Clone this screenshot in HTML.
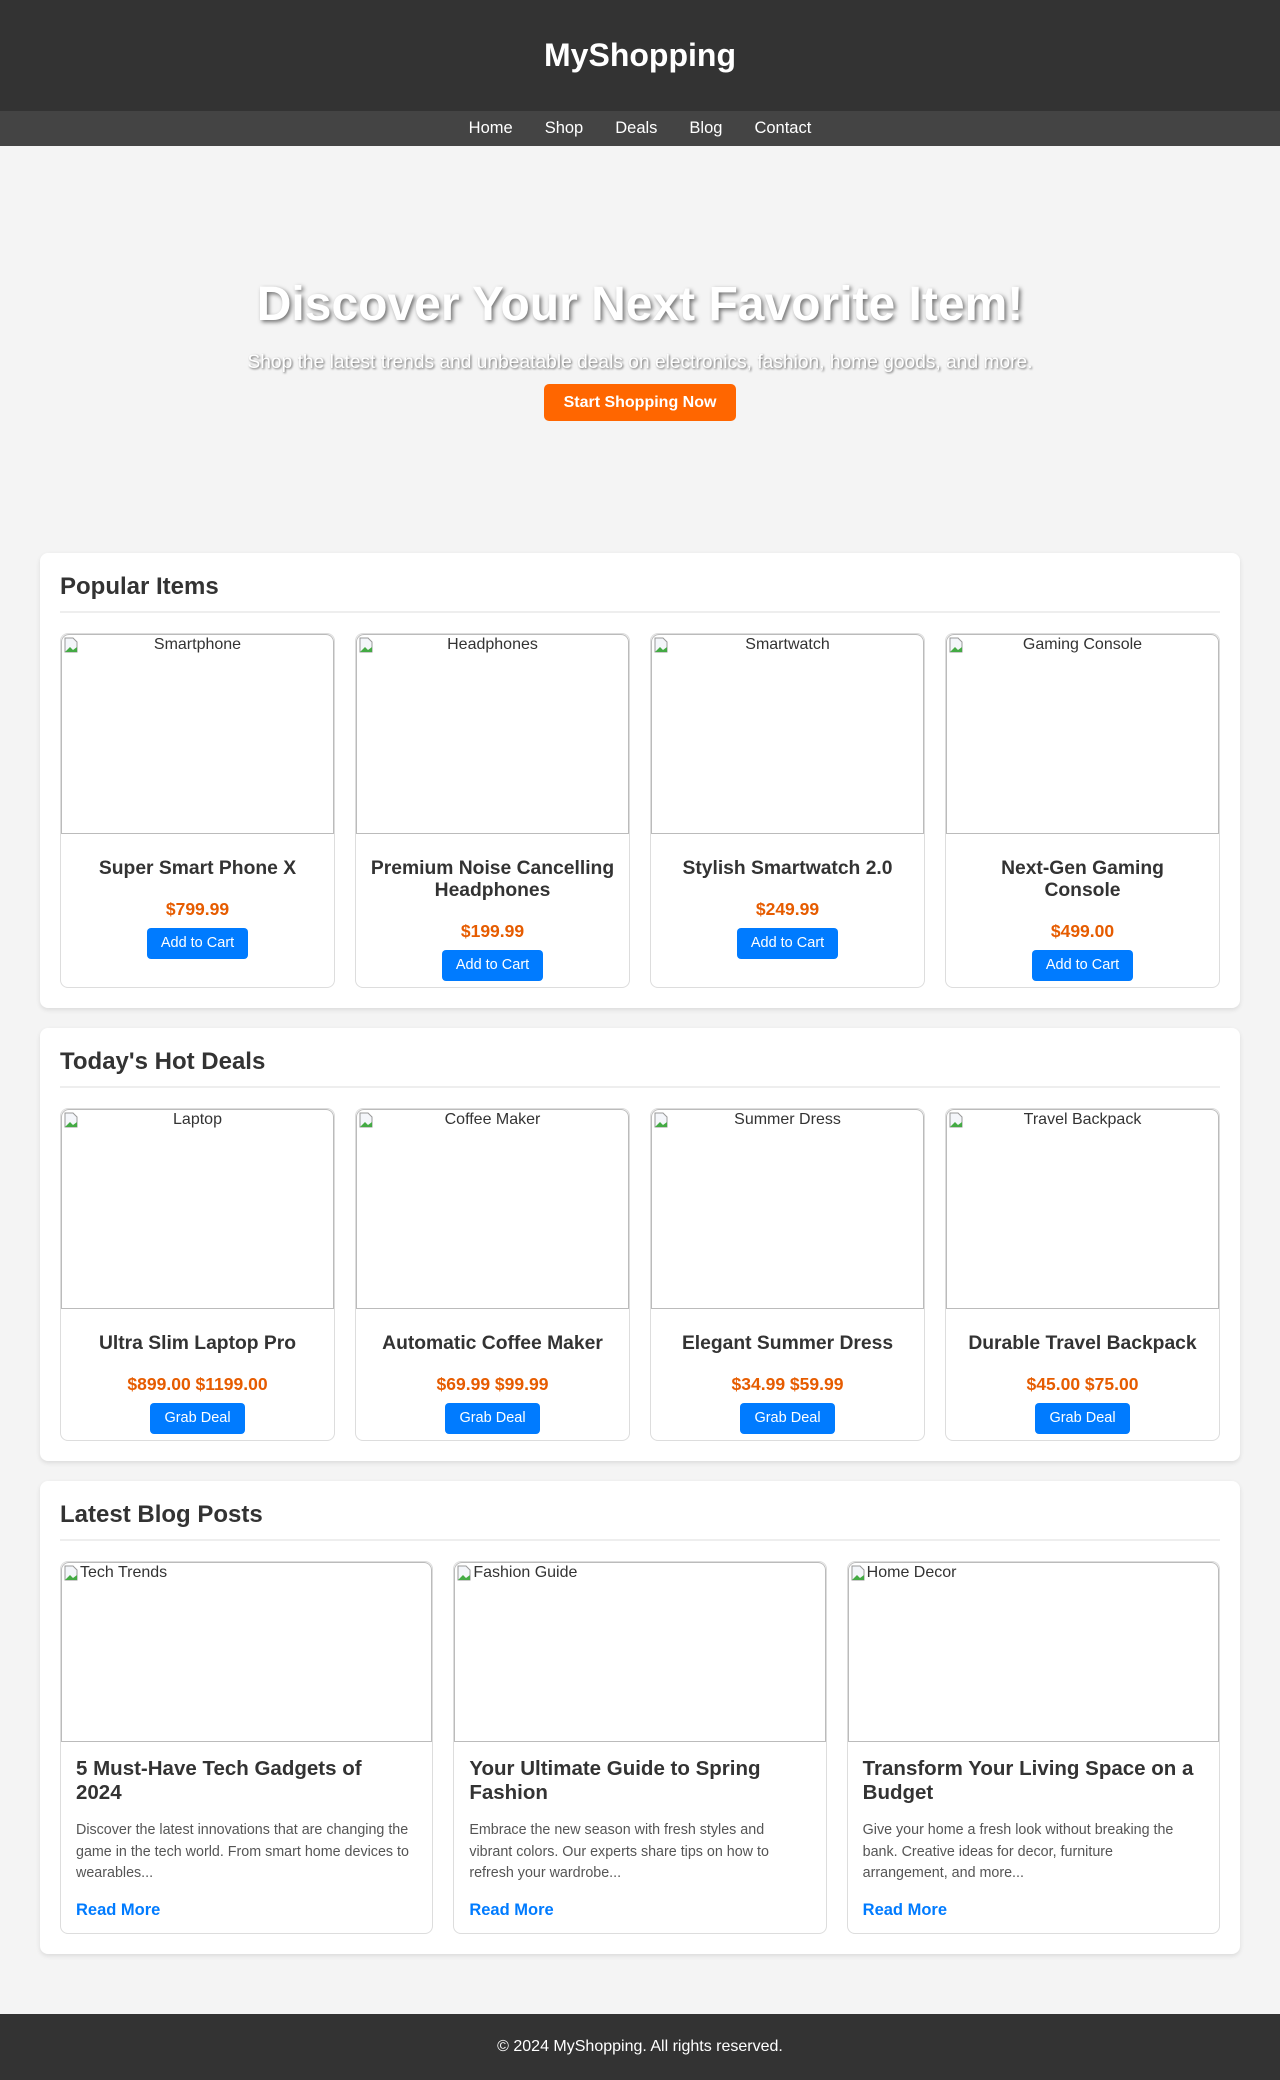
<!DOCTYPE html>
<html><head><meta charset="utf-8"><style>
*{box-sizing:border-box;margin:0;padding:0}
body{width:1280px;height:2080px;background:#f4f4f4;font-family:"Liberation Sans",Arial,sans-serif;color:#333;position:relative;overflow:hidden}
header{background:#333;height:111px;display:flex;align-items:center;justify-content:center}
header h1{color:#fff;font-size:32px;font-weight:bold}
nav{background:#444;height:35px;display:flex;align-items:center;justify-content:center}
nav a{color:#fff;text-decoration:none;font-size:16.5px;margin:0 16px}
.hero{height:387px;text-align:center;position:relative}
.hero h2{position:absolute;left:0;right:0;top:134px;font-size:48px;line-height:50px;color:#fff;text-shadow:2px 2px 4px rgba(0,0,0,.55)}
.hero p{position:absolute;left:0;right:0;top:206px;font-size:19.2px;line-height:22px;color:#fff;text-shadow:1px 1px 2px rgba(0,0,0,.6)}
.hero a{position:absolute;left:544px;top:238px;width:192px;height:37px;line-height:37px;background:#ff6600;color:#fff;font-weight:bold;font-size:16px;border-radius:5px;text-decoration:none}
main{width:1200px;margin:20px auto 0}
section{background:#fff;border-radius:8px;box-shadow:0 2px 5px rgba(0,0,0,.1);padding:20px;margin-bottom:20px}
section h2{font-size:24px;line-height:28px;padding-bottom:10px;border-bottom:2px solid #eee;margin-bottom:20px}
.grid{display:flex;gap:20px}
.card{flex:1;border:1px solid #ddd;border-radius:8px;overflow:hidden;text-align:center;display:flex;flex-direction:column}
.img{height:200px;border:1px solid #bbb;border-radius:8px 8px 0 0;position:relative;font-size:16px;line-height:18px;padding-top:1px;color:#333}
.img svg{position:absolute;left:2px;top:2px}
.card h3{font-size:19.3px;line-height:22px;margin-top:24px;padding:0 12px}
.price{color:#e65c00;font-weight:bold;font-size:17.5px;line-height:19px;margin-top:20px}
.btn{display:inline-block;background:#007bff;color:#fff;font-size:14.5px;height:31px;line-height:31px;padding:0 14px;border-radius:4px;margin-top:9px;margin-bottom:6px}
.bcard{flex:1;border:1px solid #ddd;border-radius:8px;overflow:hidden}
.bimg{height:180px;border:1px solid #bbb;border-radius:8px 8px 0 0;font-size:16px;line-height:18px;padding:1px 0 0 18px;position:relative}
.bimg svg{position:absolute;left:2px;top:2px}
.bcard .c{padding:15px 15px 13px}
.bcard h3{font-size:20.5px;line-height:24px;white-space:nowrap}
.bcard p{font-size:14.3px;line-height:21.5px;color:#555;margin-top:15px;white-space:nowrap}
.bcard a{display:block;color:#007bff;font-weight:bold;font-size:16.5px;line-height:19px;margin-top:16px;text-decoration:none}
footer{position:absolute;left:0;right:0;top:2014px;height:66px;background:#333;color:#fff;font-size:16px;display:flex;align-items:center;justify-content:center}
</style></head><body>
<header><h1>MyShopping</h1></header>
<nav><a>Home</a><a>Shop</a><a>Deals</a><a>Blog</a><a>Contact</a></nav>
<div class="hero"><h2>Discover Your Next Favorite Item!</h2><p>Shop the latest trends and unbeatable deals on electronics, fashion, home goods, and more.</p><a>Start Shopping Now</a></div>
<main>
<section><h2>Popular Items</h2><div class="grid">
<div class="card"><div class="img"><svg width="14" height="16"><path d="M1 1h8l4 4v10H1z" fill="#f4f6fa" stroke="#999"/><path d="M1 15l5-5 3 3 4-3v5z" fill="#4a4"/></svg>Smartphone</div><h3>Super Smart Phone X</h3><div class="price">$799.99</div><div><span class="btn">Add to Cart</span></div></div>
<div class="card"><div class="img"><svg width="14" height="16"><path d="M1 1h8l4 4v10H1z" fill="#f4f6fa" stroke="#999"/><path d="M1 15l5-5 3 3 4-3v5z" fill="#4a4"/></svg>Headphones</div><h3>Premium Noise Cancelling Headphones</h3><div class="price">$199.99</div><div><span class="btn">Add to Cart</span></div></div>
<div class="card"><div class="img"><svg width="14" height="16"><path d="M1 1h8l4 4v10H1z" fill="#f4f6fa" stroke="#999"/><path d="M1 15l5-5 3 3 4-3v5z" fill="#4a4"/></svg>Smartwatch</div><h3>Stylish Smartwatch 2.0</h3><div class="price">$249.99</div><div><span class="btn">Add to Cart</span></div></div>
<div class="card"><div class="img"><svg width="14" height="16"><path d="M1 1h8l4 4v10H1z" fill="#f4f6fa" stroke="#999"/><path d="M1 15l5-5 3 3 4-3v5z" fill="#4a4"/></svg>Gaming Console</div><h3>Next-Gen Gaming<br>Console</h3><div class="price">$499.00</div><div><span class="btn">Add to Cart</span></div></div>
</div></section>
<section><h2>Today's Hot Deals</h2><div class="grid">
<div class="card"><div class="img"><svg width="14" height="16"><path d="M1 1h8l4 4v10H1z" fill="#f4f6fa" stroke="#999"/><path d="M1 15l5-5 3 3 4-3v5z" fill="#4a4"/></svg>Laptop</div><h3>Ultra Slim Laptop Pro</h3><div class="price">$899.00 $1199.00</div><div><span class="btn">Grab Deal</span></div></div>
<div class="card"><div class="img"><svg width="14" height="16"><path d="M1 1h8l4 4v10H1z" fill="#f4f6fa" stroke="#999"/><path d="M1 15l5-5 3 3 4-3v5z" fill="#4a4"/></svg>Coffee Maker</div><h3>Automatic Coffee Maker</h3><div class="price">$69.99 $99.99</div><div><span class="btn">Grab Deal</span></div></div>
<div class="card"><div class="img"><svg width="14" height="16"><path d="M1 1h8l4 4v10H1z" fill="#f4f6fa" stroke="#999"/><path d="M1 15l5-5 3 3 4-3v5z" fill="#4a4"/></svg>Summer Dress</div><h3>Elegant Summer Dress</h3><div class="price">$34.99 $59.99</div><div><span class="btn">Grab Deal</span></div></div>
<div class="card"><div class="img"><svg width="14" height="16"><path d="M1 1h8l4 4v10H1z" fill="#f4f6fa" stroke="#999"/><path d="M1 15l5-5 3 3 4-3v5z" fill="#4a4"/></svg>Travel Backpack</div><h3>Durable Travel Backpack</h3><div class="price">$45.00 $75.00</div><div><span class="btn">Grab Deal</span></div></div>
</div></section>
<section><h2>Latest Blog Posts</h2><div class="grid">
<div class="bcard"><div class="bimg"><svg width="14" height="16"><path d="M1 1h8l4 4v10H1z" fill="#f4f6fa" stroke="#999"/><path d="M1 15l5-5 3 3 4-3v5z" fill="#4a4"/></svg>Tech Trends</div><div class="c"><h3>5 Must-Have Tech Gadgets of<br>2024</h3><p>Discover the latest innovations that are changing the<br>game in the tech world. From smart home devices to<br>wearables...</p><a>Read More</a></div></div>
<div class="bcard"><div class="bimg"><svg width="14" height="16"><path d="M1 1h8l4 4v10H1z" fill="#f4f6fa" stroke="#999"/><path d="M1 15l5-5 3 3 4-3v5z" fill="#4a4"/></svg>Fashion Guide</div><div class="c"><h3>Your Ultimate Guide to Spring<br>Fashion</h3><p>Embrace the new season with fresh styles and<br>vibrant colors. Our experts share tips on how to<br>refresh your wardrobe...</p><a>Read More</a></div></div>
<div class="bcard"><div class="bimg"><svg width="14" height="16"><path d="M1 1h8l4 4v10H1z" fill="#f4f6fa" stroke="#999"/><path d="M1 15l5-5 3 3 4-3v5z" fill="#4a4"/></svg>Home Decor</div><div class="c"><h3>Transform Your Living Space on a<br>Budget</h3><p>Give your home a fresh look without breaking the<br>bank. Creative ideas for decor, furniture<br>arrangement, and more...</p><a>Read More</a></div></div>
</div></section>
</main>
<footer>© 2024 MyShopping. All rights reserved.</footer>
</body></html>
